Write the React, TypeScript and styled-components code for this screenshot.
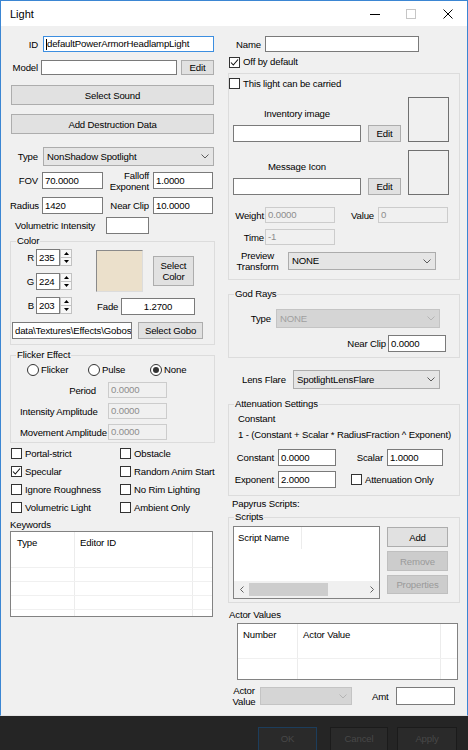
import React from 'react';
import styled, { createGlobalStyle, css } from 'styled-components';

const GlobalStyle = createGlobalStyle`
  html, body {
    margin: 0;
    padding: 0;
    background: #252525;
  }
  body {
    font-family: "Liberation Sans", Arial, sans-serif;
    font-size: 9.6px;
    letter-spacing: -0.15px;
    line-height: 12px;
    color: #000;
  }
  *, *::before, *::after {
    box-sizing: border-box;
  }
`;

type Boxed = { $w?: number; $h?: number; $ml?: number; $mt?: number };

const boxed = css<Boxed>`
  flex: none;
  width: ${p => (p.$w !== undefined ? `${p.$w}px` : 'auto')};
  height: ${p => (p.$h !== undefined ? `${p.$h}px` : 'auto')};
  margin-left: ${p => p.$ml ?? 0}px;
  margin-top: ${p => p.$mt ?? 0}px;
`;

const Screen = styled.div`
  width: 468px;
  height: 750px;
  display: flex;
  flex-direction: column;
  overflow: hidden;
`;

const Window = styled.div`
  flex: none;
  height: 716px;
  display: flex;
  flex-direction: column;
  background: #f0f0f0;
  border: 1px solid #3b86d3;
  border-bottom: 1px solid #e4e4e4;
`;

const TitleBar = styled.div`
  flex: none;
  height: 25px;
  display: flex;
  align-items: center;
  padding-left: 9px;
  background: #fff;
`;

const Title = styled.span`
  flex: 1;
  font-size: 11px;
  letter-spacing: 0;
`;

const Caption = styled.div<{ $w: number }>`
  width: ${p => p.$w}px;
  height: 25px;
  display: flex;
  align-items: center;
  justify-content: center;
`;

const Body = styled.div`
  flex: 1;
  display: flex;
  padding-left: 9px;
`;

const Col = styled.div<Boxed>`
  ${boxed}
  display: flex;
  flex-direction: column;
`;

const Row = styled.div<Boxed & { $end?: boolean; $pr?: number; $top?: boolean }>`
  ${boxed}
  display: flex;
  align-items: ${p => (p.$top ? 'flex-start' : p.$end ? 'flex-end' : 'center')};
  padding-right: ${p => p.$pr ?? 0}px;
`;

const Label = styled.span<Boxed & { $align?: 'left' | 'right' | 'center'; $pr?: number }>`
  ${boxed}
  display: block;
  text-align: ${p => p.$align ?? 'left'};
  padding-right: ${p => p.$pr ?? 0}px;
  line-height: 11px;
  white-space: nowrap;
`;

const Field = styled.div<Boxed & { $off?: boolean; $focus?: boolean; $center?: boolean }>`
  ${boxed}
  display: flex;
  align-items: center;
  justify-content: ${p => (p.$center ? 'center' : 'flex-start')};
  padding: 0 2px;
  overflow: hidden;
  white-space: nowrap;
  background: ${p => (p.$off ? '#f0f0f0' : '#fff')};
  border: 1px solid ${p => (p.$off ? '#cccccc' : p.$focus ? '#3c8ee0' : '#7a7a7a')};
  color: ${p => (p.$off ? '#8d8d8d' : '#000')};
`;

const Caret = styled.span`
  flex: none;
  width: 1px;
  height: 11px;
  background: #000;
`;

const Btn = styled.button<Boxed & { $off?: boolean }>`
  ${boxed}
  padding: 0;
  font: inherit;
  letter-spacing: inherit;
  line-height: 11px;
  text-align: center;
  background: ${p => (p.$off ? '#cccccc' : '#e1e1e1')};
  border: 1px solid ${p => (p.$off ? '#bfbfbf' : '#adadad')};
  color: ${p => (p.$off ? '#9a9a9a' : '#000')};
`;

const Combo = styled.div<Boxed & { $off?: boolean }>`
  ${boxed}
  display: flex;
  align-items: center;
  padding-left: 3px;
  background: ${p => (p.$off ? '#d5d5d5' : '#e5e5e5')};
  border: 1px solid ${p => (p.$off ? '#c4c4c4' : '#acacac')};
  color: ${p => (p.$off ? '#a0a0a0' : '#000')};
`;

const ComboText = styled.span`
  flex: 1;
  white-space: nowrap;
  overflow: hidden;
`;

const ChevronMark = styled.svg`
  flex: none;
  margin-right: 4px;
`;

const Chevron: React.FC<{ off?: boolean }> = ({ off }) => (
  <ChevronMark width="8" height="5" viewBox="0 0 8 5">
    <polyline points="0.5,0.5 4,4 7.5,0.5" fill="none" stroke={off ? '#b4b4b4' : '#5a5a5a'} />
  </ChevronMark>
);

const Group = styled.fieldset<{ $mt?: number; $pb?: number }>`
  margin: ${p => p.$mt ?? 0}px 0 0 0;
  padding: 0 0 ${p => p.$pb ?? 0}px 0;
  border: 1px solid #dcdcdc;
  min-width: 0;
  display: flex;
  flex-direction: column;
`;

const Legend = styled.legend`
  margin-left: 5px;
  padding: 0 1px;
  height: 12px;
  line-height: 12px;
`;

const Panel = styled.div<{ $mt?: number; $pb?: number }>`
  margin-top: ${p => p.$mt ?? 0}px;
  padding-bottom: ${p => p.$pb ?? 0}px;
  border: 1px solid #dcdcdc;
  display: flex;
  flex-direction: column;
`;

const CheckLine = styled.div<Boxed>`
  ${boxed}
  display: flex;
  align-items: center;
  gap: 3px;
  white-space: nowrap;
`;

const CheckBox = styled.span`
  flex: none;
  width: 11px;
  height: 11px;
  border: 1px solid #333;
  background: #fff;
  display: flex;
  align-items: center;
  justify-content: center;
`;

const Check: React.FC<{ label: string; checked?: boolean; ml?: number; mt?: number; h?: number }> = ({
  label,
  checked,
  ml,
  mt,
  h,
}) => (
  <CheckLine $ml={ml} $mt={mt} $h={h}>
    <CheckBox>
      {checked && (
        <svg width="9" height="9" viewBox="0 0 9 9">
          <polyline points="1,4.5 3.3,7 8,1.5" fill="none" stroke="#111" strokeWidth="1.1" />
        </svg>
      )}
    </CheckBox>
    <span>{label}</span>
  </CheckLine>
);

const RadioDot = styled.span<{ $on?: boolean }>`
  flex: none;
  width: 12px;
  height: 12px;
  border-radius: 50%;
  border: 1px solid #333;
  background: #fff;
  display: flex;
  align-items: center;
  justify-content: center;
  &::after {
    content: '';
    width: 6px;
    height: 6px;
    border-radius: 50%;
    background: ${p => (p.$on ? '#333' : 'transparent')};
  }
`;

const RadioItem = styled.div<Boxed>`
  ${boxed}
  display: flex;
  align-items: center;
  gap: 2px;
`;

const Spin = styled.div`
  flex: none;
  width: 12px;
  height: 17px;
  display: flex;
  flex-direction: column;
`;

const SpinHalf = styled.div`
  flex: 1;
  display: flex;
  align-items: center;
  justify-content: center;
  border: 1px solid #c2c2c2;
  background: #f7f7f7;
  & + & {
    border-top: none;
  }
`;

const Spinner = () => (
  <Spin>
    <SpinHalf>
      <svg width="5" height="3" viewBox="0 0 5 3">
        <polygon points="0,3 2.5,0 5,3" fill="#000" />
      </svg>
    </SpinHalf>
    <SpinHalf>
      <svg width="5" height="3" viewBox="0 0 5 3">
        <polygon points="0,0 2.5,3 5,0" fill="#000" />
      </svg>
    </SpinHalf>
  </Spin>
);

const Swatch = styled.div<{ $color: string }>`
  flex: none;
  width: 47px;
  height: 42px;
  background: ${p => p.$color};
  border: 1px solid #dcdcdc;
  border-top-color: #8a8a8a;
  border-left-color: #8a8a8a;
`;

const ImageWell = styled.div<Boxed>`
  ${boxed}
  border: 1px solid #707070;
`;

const ListBox = styled.div<Boxed>`
  ${boxed}
  display: flex;
  flex-direction: column;
  overflow: hidden;
  border: 1px solid #828282;
  background: #fff;
`;

const ListRow = styled.div<{ $h?: number; $line?: boolean }>`
  display: flex;
  flex: ${p => (p.$h ? 'none' : '1')};
  height: ${p => (p.$h ? `${p.$h}px` : 'auto')};
  border-bottom: ${p => (p.$line ? '1px solid #f0f0f0' : 'none')};
`;

const ListCell = styled.div<{ $w?: number; $pl?: number; $sep?: boolean }>`
  flex: ${p => (p.$w ? 'none' : '1')};
  width: ${p => (p.$w ? `${p.$w}px` : 'auto')};
  padding-left: ${p => p.$pl ?? 5}px;
  display: flex;
  align-items: center;
  white-space: nowrap;
  border-right: ${p => (p.$sep === false ? 'none' : '1px solid #ececec')};
`;

const HScroll = styled.div`
  flex: none;
  height: 17px;
  display: flex;
  align-items: center;
  background: #f0f0f0;
`;

const ScrollArrow = styled.div`
  flex: none;
  width: 15px;
  height: 17px;
  display: flex;
  align-items: center;
  justify-content: center;
`;

const ScrollThumb = styled.div`
  flex: none;
  width: 79px;
  height: 13px;
  background: #cdcdcd;
`;

const ScrollTrack = styled.div`
  flex: 1;
`;

const CheckGrid = styled.div<Boxed>`
  ${boxed}
  display: grid;
  grid-template-columns: 109px 1fr;
  grid-auto-rows: 13px;
  row-gap: 5px;
`;

const Footer = styled.div`
  flex: 1;
  display: flex;
  justify-content: flex-end;
  align-items: flex-start;
  padding: 11px 11px 0 0;
  background: #252525;
`;

const DarkBtn = styled.button<{ $w: number; $ml?: number; $primary?: boolean }>`
  width: ${p => p.$w}px;
  height: 24px;
  margin-left: ${p => p.$ml ?? 0}px;
  padding: 0;
  font: inherit;
  letter-spacing: inherit;
  background: #2a2a2a;
  border: 1px solid ${p => (p.$primary ? '#1c3d5c' : '#1b1b1b')};
  color: #484848;
`;

const keywordRows = [0, 1, 2, 3];

export default function App() {
  return (
    <>
      <GlobalStyle />
      <Screen>
        <Window>
          <TitleBar>
            <Title>Light</Title>
            <Caption $w={36}>
              <svg width="10" height="10" viewBox="0 0 10 10">
                <line x1="0" y1="5.5" x2="10" y2="5.5" stroke="#000" />
              </svg>
            </Caption>
            <Caption $w={36}>
              <svg width="10" height="10" viewBox="0 0 10 10">
                <rect x="0.5" y="0.5" width="9" height="9" fill="none" stroke="#c6c6c6" />
              </svg>
            </Caption>
            <Caption $w={38}>
              <svg width="10" height="10" viewBox="0 0 10 10">
                <path d="M0.5 0.5 L9.5 9.5 M9.5 0.5 L0.5 9.5" stroke="#000" />
              </svg>
            </Caption>
          </TitleBar>

          <Body>
            {/* left column: record, light type, colour, flicker, flags, keywords */}
            <Col $w={205}>
              <Row $mt={10} $h={16}>
                <Label $w={28} $align="right">ID</Label>
                <Field $w={171} $h={16} $ml={5} $focus>
                  <Caret />
                  defaultPowerArmorHeadlampLight
                </Field>
              </Row>
              <Row $mt={7} $h={16}>
                <Label $w={28} $align="right">Model</Label>
                <Field $w={136} $h={15} $ml={3} />
                <Btn $w={33} $h={15} $ml={4}>Edit</Btn>
              </Row>
              <Btn $w={203} $h={20} $ml={1} $mt={10}>Select Sound</Btn>
              <Btn $w={203} $h={20} $ml={1} $mt={9}>Add Destruction Data</Btn>
              <Row $mt={13} $h={19}>
                <Label $w={28} $align="right">Type</Label>
                <Combo $w={171} $h={19} $ml={5}>
                  <ComboText>NonShadow Spotlight</ComboText>
                  <Chevron />
                </Combo>
              </Row>
              <Row $mt={6} $h={17}>
                <Label $w={28} $align="right">FOV</Label>
                <Field $w={61} $h={17} $ml={4}>70.0000</Field>
                <Label $w={46} $align="right">Falloff<br />Exponent</Label>
                <Field $w={60} $h={17} $ml={4}>1.0000</Field>
              </Row>
              <Row $mt={8} $h={17}>
                <Label $w={28} $align="right">Radius</Label>
                <Field $w={61} $h={17} $ml={4}>1420</Field>
                <Label $w={46} $align="right">Near Clip</Label>
                <Field $w={60} $h={17} $ml={4}>10.0000</Field>
              </Row>
              <Row $mt={3} $h={17}>
                <Label $w={91} $ml={5}>Volumetric Intensity</Label>
                <Field $w={43} $h={17} />
              </Row>

              <Group $mt={1} $pb={5}>
                <Legend>Color</Legend>
                <Row $mt={2} $top>
                  <Col>
                    <Row $h={17}>
                      <Label $w={23} $align="right">R</Label>
                      <Field $w={24} $h={17} $ml={2}>235</Field>
                      <Spinner />
                    </Row>
                    <Row $h={17} $mt={7}>
                      <Label $w={23} $align="right">G</Label>
                      <Field $w={24} $h={17} $ml={2}>224</Field>
                      <Spinner />
                    </Row>
                    <Row $h={17} $mt={7}>
                      <Label $w={23} $align="right">B</Label>
                      <Field $w={24} $h={17} $ml={2}>203</Field>
                      <Spinner />
                    </Row>
                  </Col>
                  <Col $ml={24}>
                    <Row $mt={1}>
                      <Swatch $color="rgb(235, 224, 203)" />
                      <Btn $w={41} $h={30} $ml={10}>Select<br />Color</Btn>
                    </Row>
                    <Row $mt={6} $h={17}>
                      <Label $w={24} $ml={1}>Fade</Label>
                      <Field $w={74} $h={17} $center>1.2700</Field>
                    </Row>
                  </Col>
                </Row>
                <Row $mt={7} $h={17}>
                  <Field $w={120} $h={17} $ml={1}>data\Textures\Effects\Gobos</Field>
                  <Btn $w={65} $h={17} $ml={6}>Select Gobo</Btn>
                </Row>
              </Group>

              <Group $mt={4} $pb={2}>
                <Legend>Flicker Effect</Legend>
                <Row $mt={3} $h={12} $ml={16}>
                  <RadioItem $w={61}>
                    <RadioDot />
                    <span>Flicker</span>
                  </RadioItem>
                  <RadioItem $w={62}>
                    <RadioDot />
                    <span>Pulse</span>
                  </RadioItem>
                  <RadioItem>
                    <RadioDot $on />
                    <span>None</span>
                  </RadioItem>
                </Row>
                <Row $mt={6} $h={16}>
                  <Label $w={88} $ml={9} $align="right" $pr={12}>Period</Label>
                  <Field $w={59} $h={16} $off>0.0000</Field>
                </Row>
                <Row $mt={5} $h={16}>
                  <Label $w={88} $ml={9}>Intensity Amplitude</Label>
                  <Field $w={59} $h={16} $off>0.0000</Field>
                </Row>
                <Row $mt={5} $h={16}>
                  <Label $w={88} $ml={9}>Movement Amplitude</Label>
                  <Field $w={59} $h={16} $off>0.0000</Field>
                </Row>
              </Group>

              <CheckGrid $mt={4} $ml={1}>
                <Check label="Portal-strict" />
                <Check label="Obstacle" />
                <Check label="Specular" checked />
                <Check label="Random Anim Start" />
                <Check label="Ignore Roughness" />
                <Check label="No Rim Lighting" />
                <Check label="Volumetric Light" />
                <Check label="Ambient Only" />
              </CheckGrid>

              <Label $mt={5}>Keywords</Label>
              <ListBox $w={203} $h={86} $mt={1}>
                <ListRow $h={22}>
                  <ListCell $w={64} $pl={6}>Type</ListCell>
                  <ListCell $w={118} $pl={5}>Editor ID</ListCell>
                  <ListCell $sep={false} />
                </ListRow>
                {keywordRows.map(r => (
                  <ListRow key={r} $h={14} $line>
                    <ListCell $w={64} />
                    <ListCell $w={118} />
                    <ListCell $sep={false} />
                  </ListRow>
                ))}
                <ListRow>
                  <ListCell $w={64} />
                  <ListCell $w={118} />
                  <ListCell $sep={false} />
                </ListRow>
              </ListBox>
            </Col>

            {/* right column: name, inventory, god rays, attenuation, scripts, actor values */}
            <Col $w={232} $ml={13}>
              <Row $mt={10} $h={16}>
                <Label $w={29} $ml={8}>Name</Label>
                <Field $w={154} $h={16} />
              </Row>
              <Check label="Off by default" checked ml={1} mt={4} h={12} />

              <Panel $mt={5} $pb={9}>
                <Check label="This light can be carried" mt={4} h={11} />
                <Row $mt={8} $end>
                  <Col $ml={4}>
                    <Label $align="center" $pr={40}>Inventory image</Label>
                    <Row $mt={6} $h={17}>
                      <Field $w={128} $h={17} />
                      <Btn $w={33} $h={17} $ml={7}>Edit</Btn>
                    </Row>
                  </Col>
                  <ImageWell $w={41} $h={45} $ml={7} />
                </Row>
                <Row $mt={8} $end>
                  <Col $ml={4}>
                    <Label $align="center" $pr={40}>Message Icon</Label>
                    <Row $mt={6} $h={17}>
                      <Field $w={128} $h={17} />
                      <Btn $w={33} $h={17} $ml={7}>Edit</Btn>
                    </Row>
                  </Col>
                  <ImageWell $w={41} $h={45} $ml={7} />
                </Row>
                <Row $mt={12} $h={16}>
                  <Label $w={36} $align="right" $pr={1}>Weight</Label>
                  <Field $w={70} $h={16} $off>0.0000</Field>
                  <Label $w={43} $align="right" $pr={4}>Value</Label>
                  <Field $w={70} $h={16} $off>0</Field>
                </Row>
                <Row $mt={6} $h={16}>
                  <Label $w={36} $align="right" $pr={1}>Time</Label>
                  <Field $w={70} $h={16} $off>-1</Field>
                </Row>
                <Row $mt={7} $h={18}>
                  <Label $w={57} $align="center">Preview<br />Transform</Label>
                  <Combo $w={148} $h={18} $ml={2}>
                    <ComboText>NONE</ComboText>
                    <Chevron />
                  </Combo>
                </Row>
              </Panel>

              <Group $mt={8} $pb={5}>
                <Legend>God Rays</Legend>
                <Row $mt={9} $h={19}>
                  <Label $w={43} $align="right" $pr={1}>Type</Label>
                  <Combo $w={164} $h={19} $ml={4} $off>
                    <ComboText>NONE</ComboText>
                    <Chevron off />
                  </Combo>
                </Row>
                <Row $mt={7} $h={17}>
                  <Label $w={159} $align="right" $pr={2}>Near Clip</Label>
                  <Field $w={58} $h={17}>0.0000</Field>
                </Row>
              </Group>

              <Row $mt={12} $h={19}>
                <Label $w={51} $ml={14}>Lens Flare</Label>
                <Combo $w={147} $h={19}>
                  <ComboText>SpotlightLensFlare</ComboText>
                  <Chevron />
                </Combo>
              </Row>

              <Group $mt={9} $pb={7}>
                <Legend>Attenuation Settings</Legend>
                <Label $mt={3} $ml={9}>Constant</Label>
                <Label $mt={5} $ml={9}>1 - (Constant + Scalar * RadiusFraction ^ Exponent)</Label>
                <Row $mt={9} $h={17}>
                  <Label $w={49} $align="right" $pr={4}>Constant</Label>
                  <Field $w={58} $h={17}>0.0000</Field>
                  <Label $w={51} $align="right" $pr={4}>Scalar</Label>
                  <Field $w={56} $h={17}>1.0000</Field>
                </Row>
                <Row $mt={5} $h={17}>
                  <Label $w={49} $align="right" $pr={4}>Exponent</Label>
                  <Field $w={58} $h={17}>2.0000</Field>
                  <Check label="Attenuation Only" ml={15} />
                </Row>
              </Group>

              <Label $mt={2} $ml={4}>Papyrus Scripts:</Label>
              <Group $mt={2} $pb={3}>
                <Legend>Scripts</Legend>
                <Row $mt={3} $top>
                  <ListBox $w={147} $h={73} $ml={4}>
                    <ListRow $h={22}>
                      <ListCell $w={68} $pl={4}>Script Name</ListCell>
                      <ListCell $sep={false} />
                    </ListRow>
                    <ListRow />
                    <HScroll>
                      <ScrollArrow>
                        <svg width="4" height="7" viewBox="0 0 4 7">
                          <polyline points="3.5,0.5 0.5,3.5 3.5,6.5" fill="none" stroke="#606060" />
                        </svg>
                      </ScrollArrow>
                      <ScrollThumb />
                      <ScrollTrack />
                      <ScrollArrow>
                        <svg width="4" height="7" viewBox="0 0 4 7">
                          <polyline points="0.5,0.5 3.5,3.5 0.5,6.5" fill="none" stroke="#606060" />
                        </svg>
                      </ScrollArrow>
                    </HScroll>
                  </ListBox>
                  <Col $ml={7}>
                    <Btn $w={61} $h={20} $mt={1}>Add</Btn>
                    <Btn $w={61} $h={20} $mt={4} $off>Remove</Btn>
                    <Btn $w={61} $h={19} $mt={4} $off>Properties</Btn>
                  </Col>
                </Row>
              </Group>

              <Label $mt={6} $ml={1}>Actor Values</Label>
              <ListBox $w={221} $h={57} $mt={3} $ml={9}>
                <ListRow $h={22}>
                  <ListCell $w={60} $pl={5}>Number</ListCell>
                  <ListCell $w={143} $pl={5}>Actor Value</ListCell>
                  <ListCell $sep={false} />
                </ListRow>
                <ListRow $h={13} $line>
                  <ListCell $w={60} />
                  <ListCell $w={143} />
                  <ListCell $sep={false} />
                </ListRow>
                <ListRow>
                  <ListCell $w={60} />
                  <ListCell $w={143} />
                  <ListCell $sep={false} />
                </ListRow>
              </ListBox>
              <Row $mt={6} $h={20}>
                <Label $w={32} $align="center">Actor<br />Value</Label>
                <Combo $w={92} $h={18} $off>
                  <ComboText />
                  <Chevron off />
                </Combo>
                <Label $ml={20}>Amt</Label>
                <Field $w={59} $h={18} $ml={7} />
              </Row>
            </Col>
          </Body>
        </Window>

        <Footer>
          <DarkBtn $w={59} $primary>OK</DarkBtn>
          <DarkBtn $w={58} $ml={13}>Cancel</DarkBtn>
          <DarkBtn $w={60} $ml={9}>Apply</DarkBtn>
        </Footer>
      </Screen>
    </>
  );
}
